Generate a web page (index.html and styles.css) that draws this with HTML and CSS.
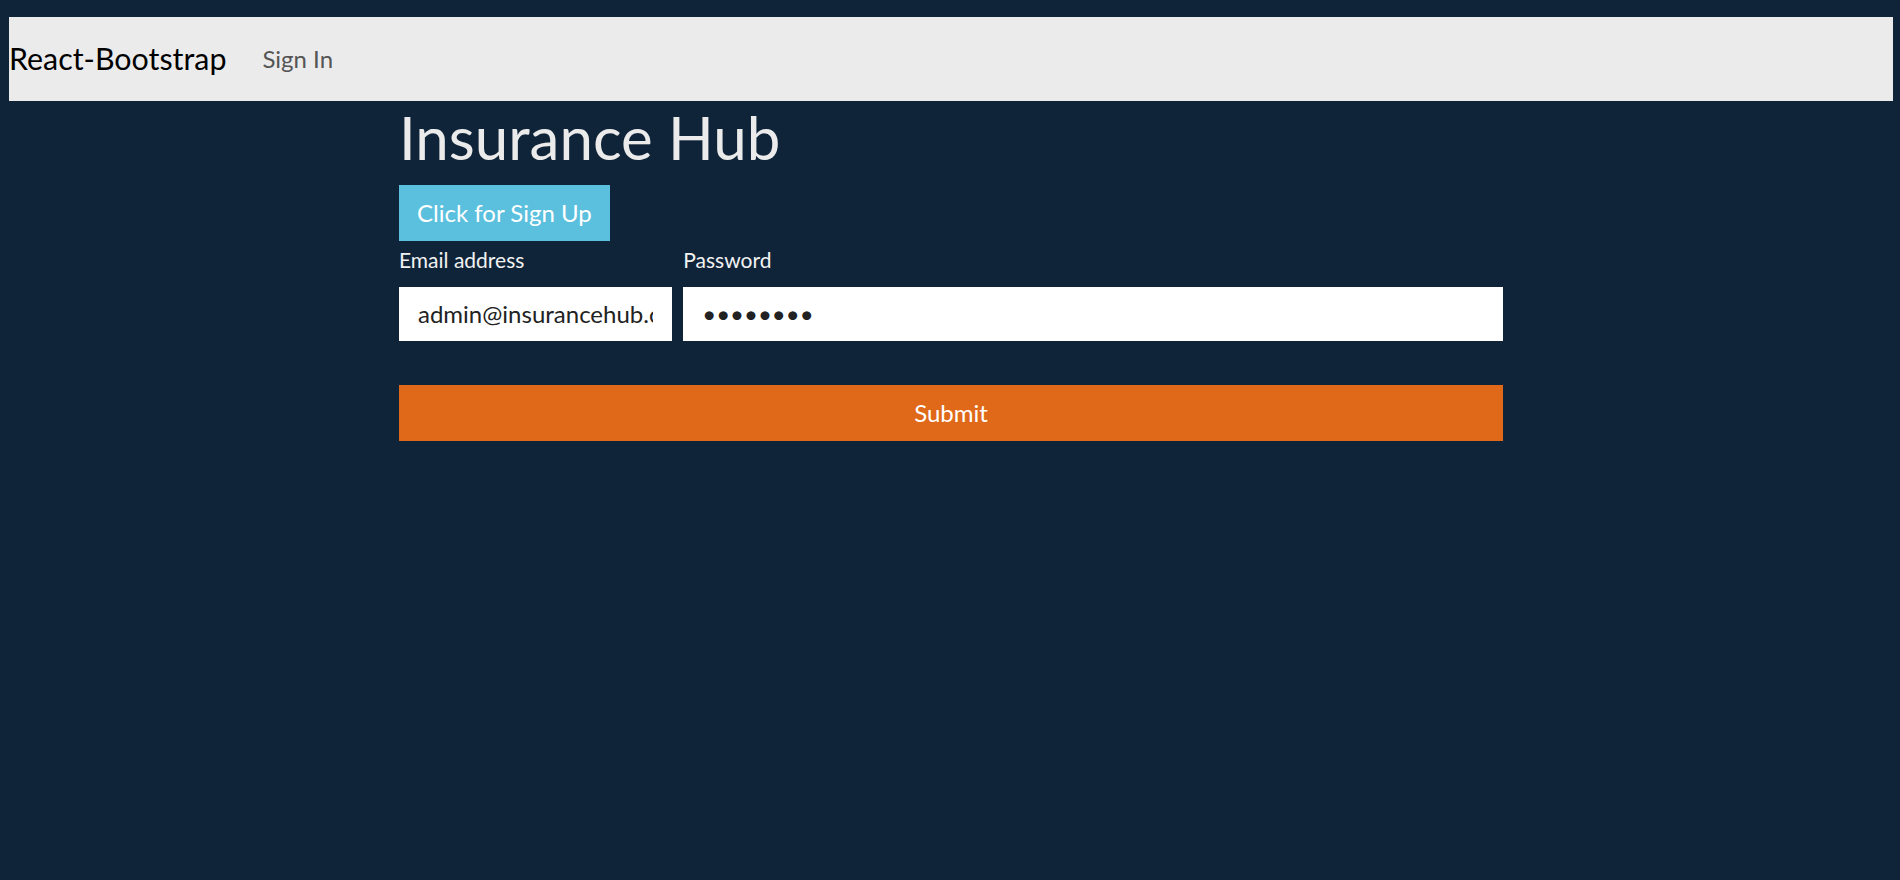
FILE: index.html
```html
<!DOCTYPE html>
<html lang="en">
<head>
<meta charset="utf-8">
<title>Insurance Hub</title>
<link rel="stylesheet" href="styles.css">
</head>
<body>
<nav class="navbar">
  <a class="brand" href="#">React-Bootstrap</a>
  <a class="nav-link" href="#">Sign In</a>
</nav>
<main class="container">
  <h1 class="title">Insurance Hub</h1>
  <button class="btn btn-info" type="button">Click for Sign Up</button>
  <form class="form">
    <div class="row">
      <div class="field">
        <label class="label" for="email">Email address</label>
        <input class="input" id="email" type="email" value="admin@insurancehub.com">
      </div>
      <div class="field">
        <label class="label" for="password">Password</label>
        <input class="input" id="password" type="password" value="password">
      </div>
    </div>
    <button class="btn btn-submit" type="button">Submit</button>
  </form>
</main>
</body>
</html>
```
FILE: styles.css
```css
html, body {
  margin: 0;
  padding: 0;
}
body {
  background: #0f2438;
  font-family: Lato, "Open Sans", sans-serif;
  padding: 17px 7px 0 9px;
  min-height: 880px;
  box-sizing: border-box;
}
.navbar {
  display: flex;
  align-items: center;
  height: 84px;
  background: #ebebeb;
  padding: 0;
}
.brand {
  font-size: 30.4px;
  color: #000;
  text-decoration: none;
  margin-right: 24px;
  line-height: 1.5;
}
.nav-link {
  font-size: 24px;
  color: #555;
  text-decoration: none;
  padding: 0 12px;
  line-height: 1.5;
}
.container {
  max-width: 1104px;
  margin: 0 auto;
}
.title {
  margin: 0 0 12px 0;
  font-size: 60px;
  font-weight: 400;
  line-height: 1.2;
  color: #ebebeb;
}
.btn {
  font-family: inherit;
  border: 0;
  border-radius: 0;
  color: #fff;
  cursor: pointer;
  display: block;
}
.btn-info {
  background: #5bc0de;
  font-size: 24px;
  line-height: 36px;
  padding: 10px 18px;
}
.form {
  margin-top: 3px;
}
.row {
  display: grid;
  grid-template-columns: 1fr 3fr;
  column-gap: 11px;
}
.field {
  display: flex;
  flex-direction: column;
  min-width: 0;
}
.label {
  font-size: 21px;
  line-height: 1.5;
  color: #f2f2f2;
  margin-bottom: 11px;
}
.input {
  font-family: inherit;
  font-size: 24px;
  height: 54px;
  box-sizing: border-box;
  border: 0;
  border-radius: 0;
  padding: 0 19px;
  color: #222;
  background: #fff;
  width: 100%;
  outline: none;
}
.btn-submit {
  margin-top: 44px;
  width: 100%;
  height: 56px;
  background: #e06919;
  font-size: 24px;
}
```
